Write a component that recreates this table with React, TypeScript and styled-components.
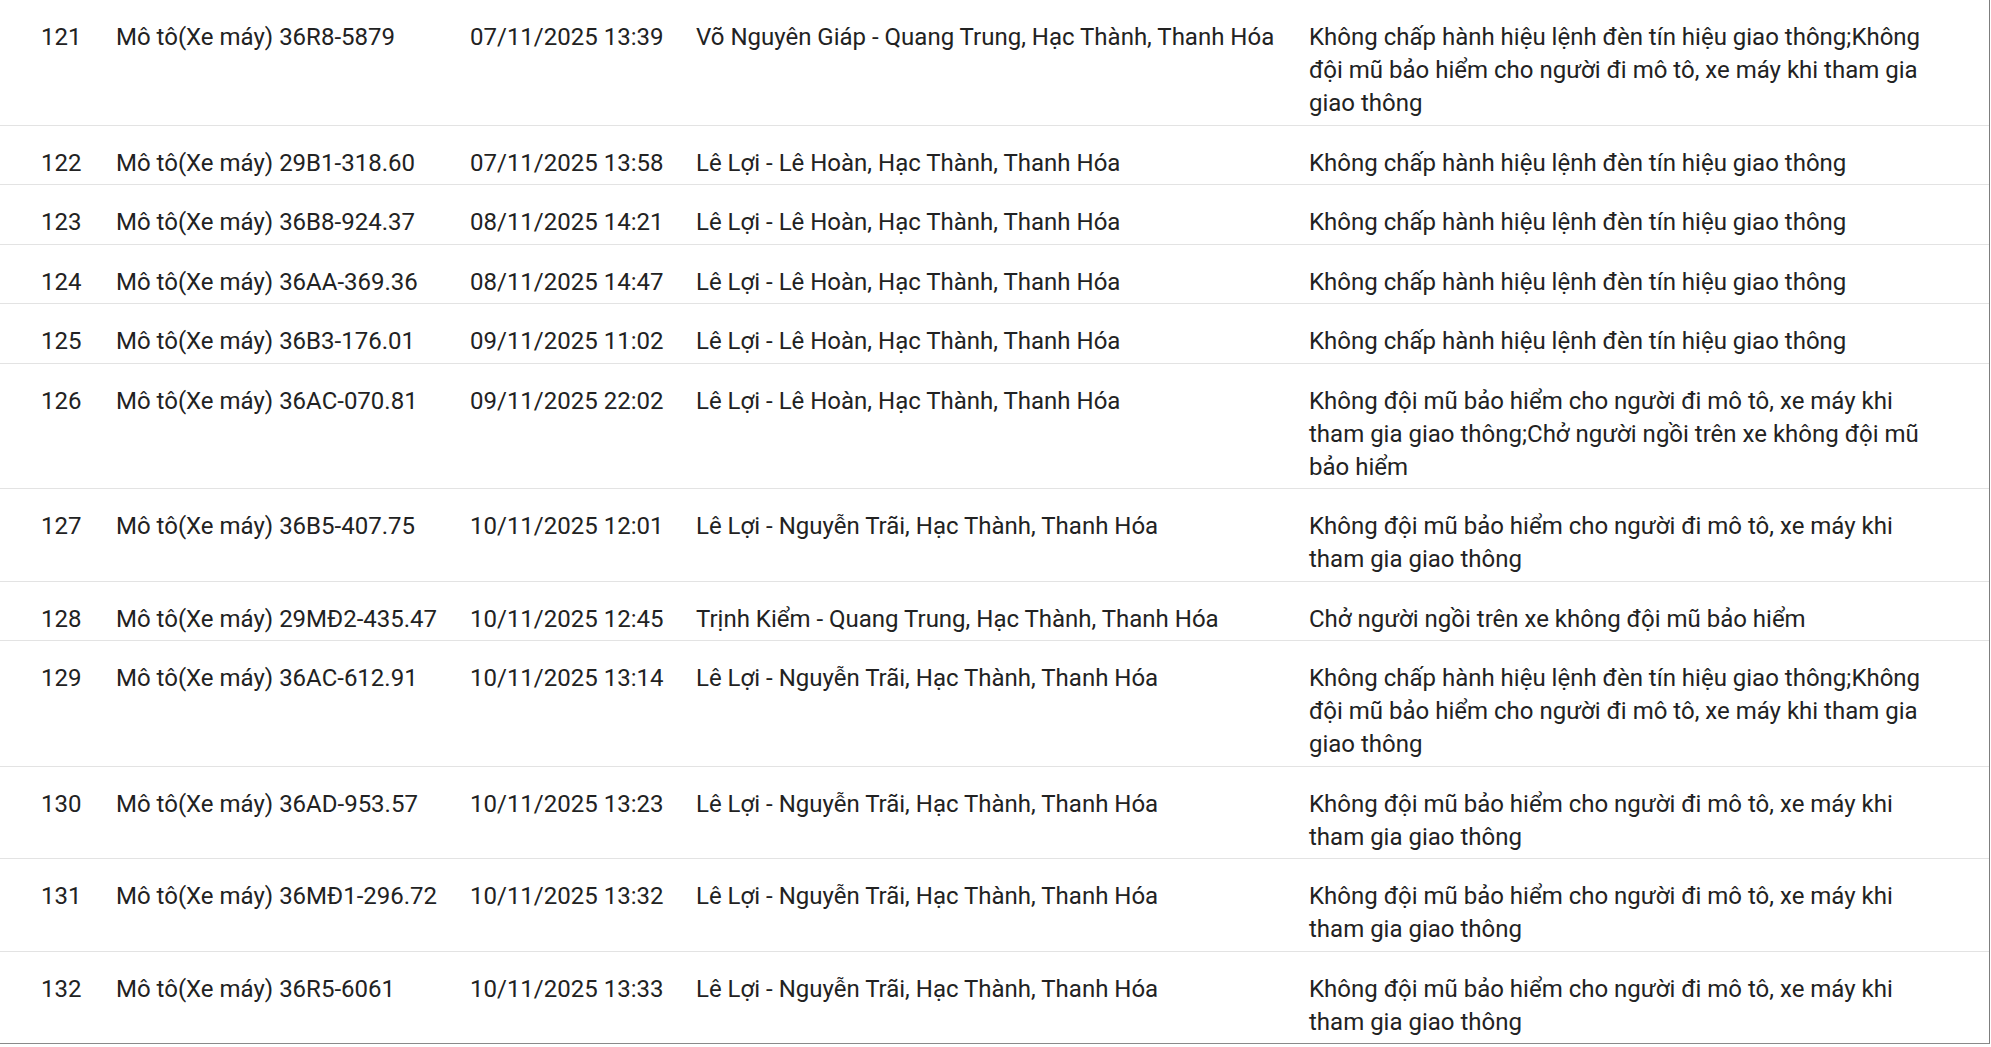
import React from "react";
import styled, { createGlobalStyle } from "styled-components";

interface Violation {
  id: number;
  vehicle: string;
  time: string;
  place: string;
  offence: string;
}

const NO_LIGHT = "Không chấp hành hiệu lệnh đèn tín hiệu giao thông";
const NO_HELMET =
  "Không đội mũ bảo hiểm cho người đi mô tô, xe máy khi tham gia giao thông";
const PASSENGER = "Chở người ngồi trên xe không đội mũ bảo hiểm";
const LE_HOAN = "Lê Lợi - Lê Hoàn, Hạc Thành, Thanh Hóa";
const NGUYEN_TRAI = "Lê Lợi - Nguyễn Trãi, Hạc Thành, Thanh Hóa";

const violations: Violation[] = [
  {
    id: 121,
    vehicle: "Mô tô(Xe máy) 36R8-5879",
    time: "07/11/2025 13:39",
    place: "Võ Nguyên Giáp - Quang Trung, Hạc Thành, Thanh Hóa",
    offence: `${NO_LIGHT};${NO_HELMET}`,
  },
  { id: 122, vehicle: "Mô tô(Xe máy) 29B1-318.60", time: "07/11/2025 13:58", place: LE_HOAN, offence: NO_LIGHT },
  { id: 123, vehicle: "Mô tô(Xe máy) 36B8-924.37", time: "08/11/2025 14:21", place: LE_HOAN, offence: NO_LIGHT },
  { id: 124, vehicle: "Mô tô(Xe máy) 36AA-369.36", time: "08/11/2025 14:47", place: LE_HOAN, offence: NO_LIGHT },
  { id: 125, vehicle: "Mô tô(Xe máy) 36B3-176.01", time: "09/11/2025 11:02", place: LE_HOAN, offence: NO_LIGHT },
  {
    id: 126,
    vehicle: "Mô tô(Xe máy) 36AC-070.81",
    time: "09/11/2025 22:02",
    place: LE_HOAN,
    offence: `${NO_HELMET};${PASSENGER}`,
  },
  { id: 127, vehicle: "Mô tô(Xe máy) 36B5-407.75", time: "10/11/2025 12:01", place: NGUYEN_TRAI, offence: NO_HELMET },
  {
    id: 128,
    vehicle: "Mô tô(Xe máy) 29MĐ2-435.47",
    time: "10/11/2025 12:45",
    place: "Trịnh Kiểm - Quang Trung, Hạc Thành, Thanh Hóa",
    offence: PASSENGER,
  },
  {
    id: 129,
    vehicle: "Mô tô(Xe máy) 36AC-612.91",
    time: "10/11/2025 13:14",
    place: NGUYEN_TRAI,
    offence: `${NO_LIGHT};${NO_HELMET}`,
  },
  { id: 130, vehicle: "Mô tô(Xe máy) 36AD-953.57", time: "10/11/2025 13:23", place: NGUYEN_TRAI, offence: NO_HELMET },
  { id: 131, vehicle: "Mô tô(Xe máy) 36MĐ1-296.72", time: "10/11/2025 13:32", place: NGUYEN_TRAI, offence: NO_HELMET },
  { id: 132, vehicle: "Mô tô(Xe máy) 36R5-6061", time: "10/11/2025 13:33", place: NGUYEN_TRAI, offence: NO_HELMET },
];

const App: React.FC = () => {
  return (
    <>
      <GlobalStyle />
      <TableContainer>
        <Table>
          <colgroup>
            <col style={{ width: 103 }} />
            <col style={{ width: 354 }} />
            <col style={{ width: 226 }} />
            <col style={{ width: 613 }} />
            <col />
          </colgroup>
          <tbody>
            {violations.map((v) => (
              <TableRow key={v.id}>
                <IndexCell>{v.id}</IndexCell>
                <TableCell>{v.vehicle}</TableCell>
                <TableCell>{v.time}</TableCell>
                <TableCell>{v.place}</TableCell>
                <TableCell $last>{v.offence}</TableCell>
              </TableRow>
            ))}
          </tbody>
        </Table>
      </TableContainer>
    </>
  );
};

const GlobalStyle = createGlobalStyle`
  html, body {
    margin: 0;
    padding: 0;
    background: #ffffff;
  }
  body {
    font-family: Roboto, "Noto Sans", sans-serif;
    color: #212121;
    overflow: hidden;
  }
`;

const TableContainer = styled.div`
  width: 1989px;
  border-right: 1.5px solid #7d7d7d;
  border-bottom: 1.5px solid #8a8a8a;
  background: #ffffff;
`;

const Table = styled.table`
  width: 100%;
  table-layout: fixed;
  border-collapse: collapse;
`;

const TableRow = styled.tr`
  border-bottom: 1.5px solid #e3e3e3;
  &:last-child {
    border-bottom: none;
  }
`;

const TableCell = styled.td<{ $last?: boolean }>`
  vertical-align: top;
  padding: 21px ${(p) => (p.$last ? "60px" : "13px")} 4.5px 13px;
  font-size: 24px;
  line-height: 33px;
  color: #222222;
  text-align: left;
  white-space: ${(p) => (p.$last ? "normal" : "nowrap")};
`;

const IndexCell = styled(TableCell)`
  padding-left: 41px;
`;

export default App;
